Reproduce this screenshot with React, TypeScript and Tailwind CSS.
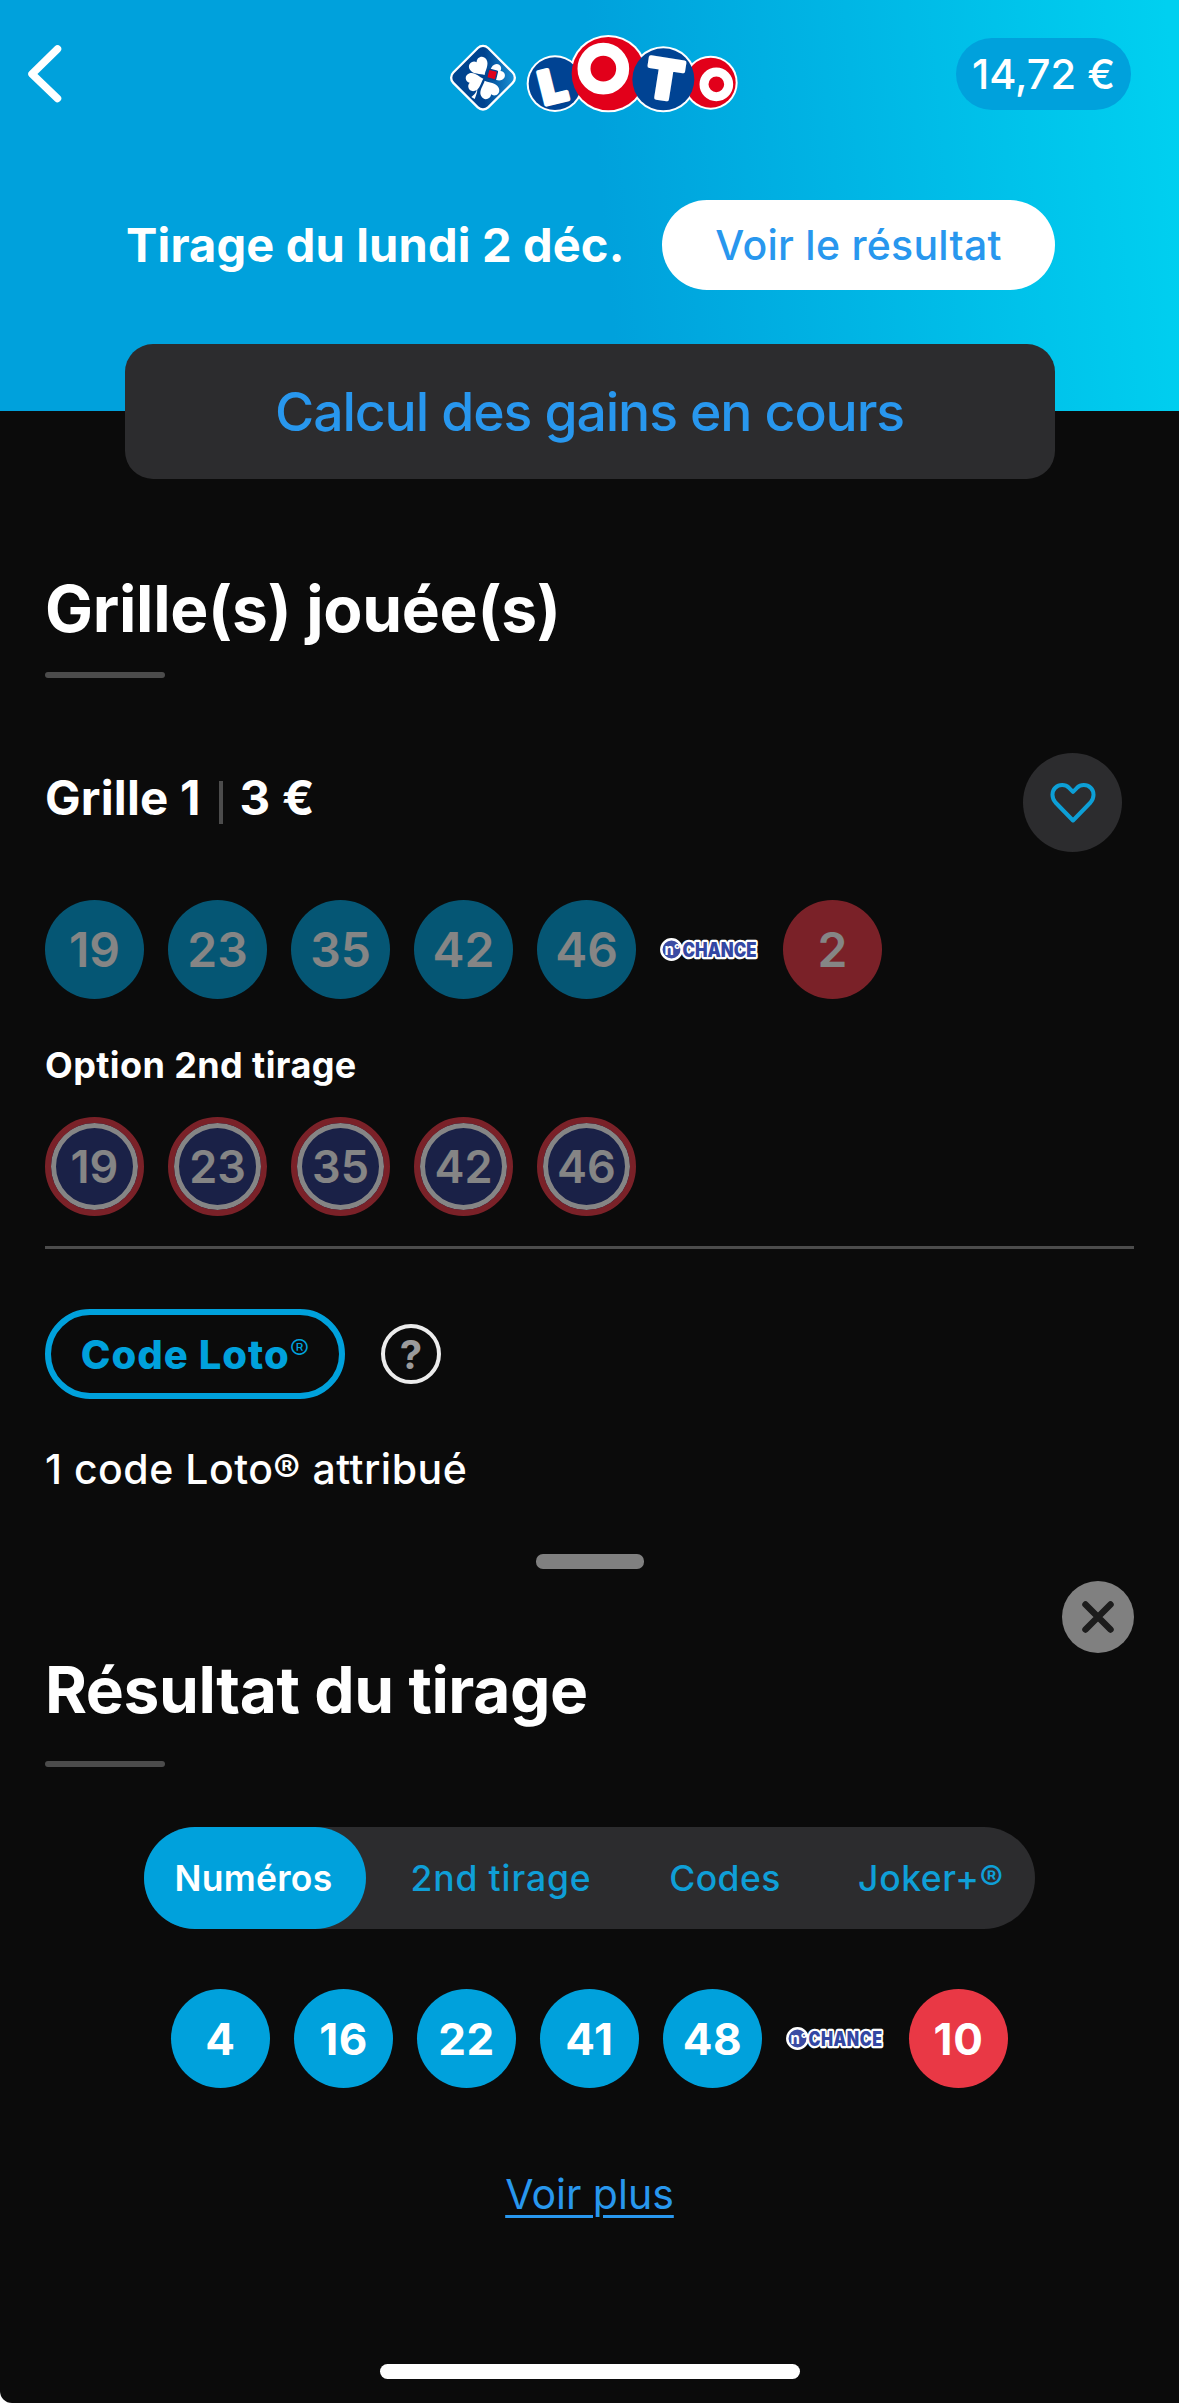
import React from 'react';

interface BallProps {
  value: number;
  className: string;
}

const playedNumbers = [19, 23, 35, 42, 46];
const drawnNumbers = [4, 16, 22, 41, 48];

const tabs = [
  { name: '2nd tirage', className: 'w-[270px] tracking-[0.9px]' },
  { name: 'Codes', className: 'w-[178px] tracking-[0.4px]' },
  { name: 'Joker+®', className: 'w-[221px] pl-[13px] tracking-[0.6px]' },
];

const LEAF = 'M0 0C-8 -10 -27 -18 -27 -34C-27 -52 -6 -54 0 -42C6 -54 27 -52 27 -34C27 -18 8 -10 0 0Z';

const LotoLogo = () => (
  <svg className="h-[110px] w-[310px]" viewBox="0 0 930 330">
    <defs>
      <linearGradient id="diamond" x1="0.2" y1="0.8" x2="1" y2="0">
        <stop offset="0.4" stopColor="#00438f" />
        <stop offset="1" stopColor="#1b9be0" />
      </linearGradient>
    </defs>
    <rect
      x="55"
      y="99"
      width="148"
      height="148"
      rx="22"
      transform="rotate(45 129 173)"
      fill="url(#diamond)"
      stroke="#fff"
      strokeWidth="7"
    />
    <g fill="#fff">
      <path d={LEAF} transform="translate(134 165) rotate(-32) scale(1.08)" />
      <path d={LEAF} transform="translate(130 176) rotate(-107) scale(1.02)" />
      <path d={LEAF} transform="translate(134 182) rotate(155) scale(1.08)" />
      <path d={LEAF} transform="translate(146 172) rotate(62) scale(0.95)" />
      <path d="M110 207C110 218 102 224 94 231L104 237C108 226 112 219 112 207Z" />
    </g>
    <rect x="143" y="150" width="27" height="27" rx="2" transform="rotate(14 156 163)" fill="#e2001a" stroke="#00438f" strokeWidth="4" />
    <g fill="#fff">
      <circle cx="345" cy="191" r="85" />
      <circle cx="505" cy="161" r="116" />
      <circle cx="670" cy="178" r="99" />
      <circle cx="812" cy="188" r="81" />
    </g>
    <circle cx="345" cy="191" r="79" fill="#004393" />
    <circle cx="505" cy="161" r="110" fill="#e2001a" />
    <circle cx="812" cy="188" r="75" fill="#e2001a" />
    <circle cx="670" cy="178" r="93" fill="#004393" />
    <circle cx="490" cy="146" r="58" fill="none" stroke="#fff" strokeWidth="39" />
    <circle cx="829" cy="193" r="37" fill="none" stroke="#fff" strokeWidth="27" />
    <g
      fill="#fff"
      stroke="#fff"
      strokeWidth="13"
      strokeLinejoin="round"
      className="font-['Inter',sans-serif] font-black"
      textAnchor="middle"
    >
      <text transform="translate(350 246) rotate(-14)" fontSize="137">L</text>
      <text transform="translate(665 235) rotate(9)" fontSize="160">T</text>
    </g>
  </svg>
);

const ChanceLogo = () => (
  <svg className="h-[26px] w-[99px] shrink-0 overflow-visible" viewBox="0 0 99 26">
    <circle cx="11.500" cy="12.500" r="10.200" fill="#3b4ba3" stroke="#fff" strokeWidth="2.500" />
    <text
      x="22.500"
      y="19.500"
      fontSize="19.500"
      textLength="74"
      lengthAdjust="spacingAndGlyphs"
      fill="#3347a3"
      stroke="#fff"
      strokeWidth="4.500"
      strokeLinejoin="round"
      className="font-['Inter',sans-serif] font-black [paint-order:stroke]"
    >
      CHANCE
    </text>
    <text x="4.500" y="18" fontSize="15" fill="#fff" className="font-['Inter',sans-serif] font-bold">
      n°
    </text>
  </svg>
);

const Ball = ({ value, className }: BallProps) => (
  <div className={`flex h-[99px] w-[99px] shrink-0 items-center justify-center rounded-full text-white ${className}`}>
    {value}
  </div>
);

const SectionRule = ({ className }: { className: string }) => (
  <div className={`h-[6px] w-[120px] rounded-full bg-[#4c4c4c] ${className}`} />
);

const Header = () => (
  <header className="h-[411px] bg-[linear-gradient(85deg,#00a1dc_51%,#00d0f0_99%)]">
    <div className="flex h-[148px] items-center">
      <button className="ml-[27px]">
        <svg className="h-[60px] w-[36px]" viewBox="0 0 36 60" fill="none">
          <path d="M30.500 5L5 30l25.500 24.500" stroke="#fff" strokeWidth="7.500" strokeLinecap="round" strokeLinejoin="round" />
        </svg>
      </button>
      <div className="mt-[2px] ml-[377px]">
        <LotoLogo />
      </div>
      <div className="mr-[48px] ml-auto flex h-[72px] w-[175px] items-center justify-center rounded-full bg-[#00a1dc] pt-[1px] text-[41.500px] font-medium whitespace-nowrap text-white">
        14,72 €
      </div>
    </div>
    <div className="mt-[52px] mr-[124px] ml-[126px] flex h-[90px] items-center justify-between">
      <span className="text-[47px] font-bold tracking-[0.15px] whitespace-nowrap text-white">Tirage du lundi 2 déc.</span>
      <button className="h-[90px] w-[393px] rounded-full bg-white pt-[1px] text-[41px] font-[450] tracking-[0.25px] text-[#2897ee]">
        Voir le résultat
      </button>
    </div>
  </header>
);

const PlayedGrid = () => (
  <section className="px-[45px]">
    <h1 className="mt-[92px] text-[64px] leading-[76px] font-bold tracking-[-0.28px] text-white">Grille(s) jouée(s)</h1>
    <SectionRule className="mt-[25px]" />

    <div className="mt-[75px] flex h-[99px] items-center pr-[12px]">
      <div className="flex items-center pb-[10px] text-[47.500px] leading-[56px] font-bold tracking-[0.2px] text-white">
        <span>Grille 1</span>
        <span className="mt-[10px] mr-[17px] ml-[18px] h-[43px] w-[4px] bg-[#4c4c4c]" />
        <span>3 €</span>
      </div>
      <button className="ml-auto flex h-[99px] w-[99px] items-center justify-center rounded-full bg-[#2c2c2e]">
        <svg className="h-[42px] w-[46px]" viewBox="0 0 46 42" fill="none">
          <path
            d="M23 38.500L5.500 20.500C1.500 16 1.500 9.500 5.300 5.800C9.300 2 15.300 2.300 19 5.800L23 9.800L27 5.800C30.700 2.300 36.700 2 40.700 5.800C44.500 9.500 44.500 16 40.500 20.500Z"
            stroke="#0d9fd6"
            strokeWidth="4"
            strokeLinejoin="round"
          />
        </svg>
      </button>
    </div>

    <div className="mt-[48px] flex items-center gap-[24px] text-[48px] font-semibold">
      {playedNumbers.map((n) => (
        <Ball key={n} value={n} className="bg-[#00a1dc] opacity-50" />
      ))}
      <ChanceLogo />
      <Ball value={2} className="bg-[#e93845] opacity-50" />
    </div>

    <p className="mt-[44px] text-[36px] leading-[44px] font-bold tracking-[0.4px] text-white">Option 2nd tirage</p>
    <div className="mt-[30px] flex gap-[24px] text-[45px] font-semibold">
      {playedNumbers.map((n) => (
        <Ball key={n} value={n} className="border-[6px] border-[#e93845] bg-[#2a3783] pt-[1px] opacity-50 inset-ring-[5px] inset-ring-white" />
      ))}
    </div>
    <div className="mt-[30px] h-[3px] bg-[#4c4c4c]" />

    <div className="mt-[60px] flex h-[90px] items-center gap-[36px]">
      <div className="flex h-[90px] w-[300px] items-center justify-center rounded-full border-[6px] border-[#00a1dc] pt-[1px] text-[40px] font-extrabold tracking-[1px] whitespace-nowrap text-[#00a1dc]">
        Code Loto
        <span className="mb-[9px] text-[29px] font-light tracking-normal">®</span>
      </div>
      <button className="flex h-[60px] w-[60px] items-center justify-center rounded-full border-[4px] border-[#ececec] pt-[1px] text-[40px] font-bold text-[#9b9b9b]">
        ?
      </button>
    </div>
    <p className="mt-[45px] text-[41px] leading-[50px] font-[450] tracking-[0.5px] text-white">1 code Loto® attribué</p>
  </section>
);

const DrawResult = () => (
  <section className="px-[45px]">
    <div className="mx-auto mt-[60px] h-[15px] w-[108px] rounded-[7px] bg-[#808080]" />
    <button className="mt-[12px] ml-auto flex h-[72px] w-[72px] items-center justify-center rounded-full bg-[#808080]">
      <svg className="h-[32px] w-[32px]" viewBox="0 0 32 32">
        <path d="M3.500 3.500L28.500 28.500M28.500 3.500L3.500 28.500" stroke="#1c1c1c" strokeWidth="6.500" strokeLinecap="round" />
      </svg>
    </button>
    <h1 className="text-[64px] leading-[74px] font-bold tracking-[-0.4px] text-white">Résultat du tirage</h1>
    <SectionRule className="mt-[34px]" />

    <div className="mt-[60px] ml-[99px] flex h-[102px] w-[891px] rounded-full bg-[#2c2c2e] text-[35.500px] font-medium text-[#0f9fd7]">
      <button className="w-[222px] rounded-full bg-[#00a1dc] pt-[2px] pr-[3px] font-semibold tracking-[0.3px] text-white">
        Numéros
      </button>
      {tabs.map((tab) => (
        <button key={tab.name} className={`pt-[2px] whitespace-nowrap ${tab.className}`}>
          {tab.name}
        </button>
      ))}
    </div>

    <div className="mt-[60px] flex items-center justify-center gap-[24px] text-[44px] font-bold tracking-[0.6px]">
      {drawnNumbers.map((n) => (
        <Ball key={n} value={n} className="bg-[#00a1dc]" />
      ))}
      <ChanceLogo />
      <Ball value={10} className="bg-[#e93845]" />
    </div>

    <div className="mt-[81px] text-center text-[41px] leading-[50px] text-[#2897ee]">
      <a className="underline decoration-[3px] underline-offset-[6px]">Voir plus</a>
    </div>
  </section>
);

const App = () => {
  return (
    <div className="w-[1179px] bg-white">
      <main className="h-[2403px] w-[1179px] overflow-hidden rounded-bl-[12px] bg-[#0b0b0b] font-['Inter',sans-serif]">
        <Header />
        <div className="relative mx-auto -mt-[67px] flex h-[135px] w-[930px] items-center justify-center rounded-[28px] bg-[#2c2c2e] pt-[1px] text-[53.500px] font-[450] tracking-[-1.1px] text-[#2897ee]">
          Calcul des gains en cours
        </div>
        <PlayedGrid />
        <DrawResult />
        <div className="mx-auto mt-[145px] h-[15px] w-[420px] rounded-full bg-white" />
      </main>
    </div>
  );
};

export default App;
